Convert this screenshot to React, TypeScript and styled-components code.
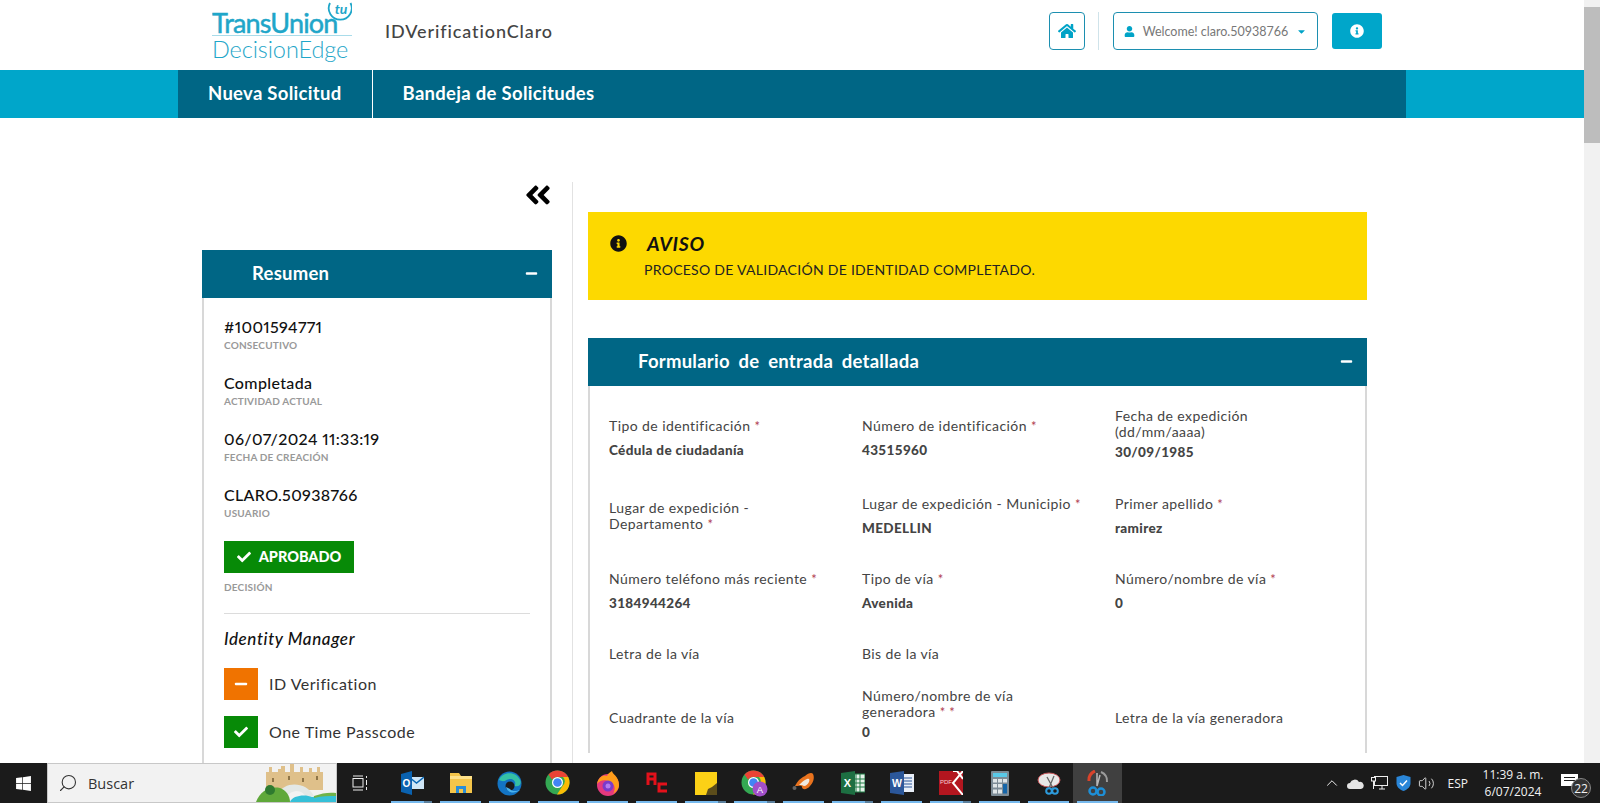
// @ts-nocheck
import React from "react";
import styled, { createGlobalStyle } from "styled-components";
import {
  FaHome,
  FaUser,
  FaCaretDown,
  FaInfoCircle,
  FaCheck,
  FaMinus,
  FaAngleDoubleLeft,
  FaWindows,
} from "react-icons/fa";
import { Search, ChevronUp, Volume2 } from "lucide-react";

const GlobalStyle = createGlobalStyle`
  html, body {
    margin: 0;
    padding: 0;
    overflow: hidden;
    background: #fff;
    font-family: "Lato", "Liberation Sans", sans-serif;
  }
  * { box-sizing: border-box; }
`;

const Screen = styled.div`
  width: 1600px;
  height: 803px;
  display: flex;
  flex-direction: column;
`;
const Viewport = styled.div`
  flex: 1;
  min-height: 0;
  display: flex;
`;
const Page = styled.div`
  flex: 1;
  min-width: 0;
  overflow: hidden;
`;
const Scrollbar = styled.div`
  width: 16px;
  background: #f1f1f1;
  padding-top: 7px;
`;
const ScrollThumb = styled.div`
  height: 136px;
  background: #bdbdbd;
`;

const Header = styled.header`
  height: 70px;
  display: flex;
  align-items: center;
  padding: 0 202px 0 212px;
`;
const Logo = styled.div`
  position: relative;
  width: 140px;
  height: 70px;
  color: #1fa6c9;
  overflow: hidden;
`;
const LogoTop = styled.div`
  font-size: 27px;
  font-weight: 400;
  letter-spacing: -0.8px;
  line-height: 24px;
  padding-top: 11px;
  height: 36px;
  border-bottom: 1px solid #a9dcea;
  -webkit-text-stroke: 0.5px #1fa6c9;
  white-space: nowrap;
`;
const LogoBottom = styled.div`
  font-size: 23.5px;
  font-weight: 300;
  letter-spacing: -0.1px;
  line-height: 26px;
  white-space: nowrap;
`;
const LogoMark = styled.svg`
  position: absolute;
  right: 0;
  top: 0;
`;
const AppTitle = styled.div`
  margin-left: 33px;
  margin-bottom: 8px;
  font-size: 18px;
  font-weight: 500;
  letter-spacing: 0.9px;
  color: #444;
`;
const Actions = styled.div`
  margin-left: auto;
  margin-bottom: 8px;
  display: flex;
  align-items: center;
`;
const OutlineButton = styled.div`
  height: 38px;
  width: ${(p) => p.$width}px;
  border: 1px solid #1c8fb0;
  border-radius: 4px;
  display: flex;
  align-items: center;
  justify-content: center;
  gap: 8px;
  color: #00a3c7;
  font-size: 13px;
  background: #fff;
`;
const ActionDivider = styled.div`
  width: 1px;
  height: 38px;
  background: #cfe3ea;
  margin: 0 14px 0 13px;
`;
const WelcomeText = styled.span`
  color: #777;
  font-size: 12.5px;
`;
const InfoButton = styled.div`
  height: 36px;
  width: 50px;
  margin-left: 14px;
  border-radius: 3px;
  background: #00a6ca;
  color: #fff;
  display: flex;
  align-items: center;
  justify-content: center;
  font-size: 14px;
`;

const NavBand = styled.nav`
  height: 48px;
  background: #00a6ca;
  padding: 0 178px;
`;
const NavInner = styled.div`
  height: 100%;
  background: #006685;
  display: flex;
`;
const NavItem = styled.div`
  padding: 0 30px 3px;
  display: flex;
  align-items: center;
  color: #fff;
  font-size: 18.5px;
  font-weight: 700;
  letter-spacing: 0.3px;
  border-right: ${(p) => (p.$divider ? "1px solid #fff" : "none")};
`;

const Content = styled.main`
  display: flex;
  margin-top: 64px;
  padding-left: 202px;
`;
const LeftColumn = styled.aside`
  width: 350px;
  flex: none;
`;
const CollapseRow = styled.div`
  height: 68px;
  display: flex;
  justify-content: flex-end;
  font-size: 30px;
  line-height: 1;
  color: #000;
`;
const CollapseIcon = styled.span`
  display: flex;
  margin: -2px -1px 0 0;
`;
const PanelHead = styled.div`
  height: 48px;
  background: #006685;
  color: #fff;
  display: flex;
  align-items: center;
  justify-content: space-between;
  padding: 0 14px 2px ${(p) => p.$indent}px;
  font-size: 18.5px;
  font-weight: 700;
  word-spacing: ${(p) => p.$wordGap || 0}px;
  letter-spacing: 0.25px;
`;
const PanelBody = styled.div`
  border-left: 2px solid #d8d8d8;
  border-right: 2px solid #d8d8d8;
  padding: ${(p) => p.$padding};
`;
const SummaryItem = styled.div`
  margin-bottom: 21.9px;
`;
const SummaryValue = styled.div`
  font-size: 16px;
  line-height: 20px;
  font-weight: 500;
  letter-spacing: 0.35px;
  color: #111;
  font-variant-numeric: proportional-nums;
`;
const SummaryLabel = styled.div`
  font-size: 10px;
  line-height: 14px;
  padding-top: 1px;
  font-weight: 700;
  letter-spacing: 0.2px;
  color: #999;
  text-transform: uppercase;
  margin-bottom: -1px;
`;
const ApprovedBadge = styled.div`
  width: 130px;
  height: 32px;
  background: #078a07;
  color: #fff;
  display: flex;
  align-items: center;
  justify-content: center;
  gap: 8px;
  font-size: 14.5px;
  font-weight: 900;
  margin: 1px 0 6px;
`;
const Rule = styled.div`
  height: 1px;
  background: #dcdcdc;
  margin: 20px 0 15px;
`;
const SectionName = styled.div`
  font-size: 17px;
  line-height: 20px;
  font-style: italic;
  font-weight: 500;
  letter-spacing: 0.6px;
  color: #111;
  margin-bottom: 19px;
`;
const CheckRow = styled.div`
  display: flex;
  align-items: center;
  gap: 11px;
  margin-bottom: 16px;
  font-size: 16px;
  letter-spacing: 0.5px;
  color: #333;
`;
const CheckLabel = styled.span`
  margin-top: -1px;
`;
const CheckBox = styled.div`
  width: 34px;
  height: 32px;
  background: ${(p) => p.$color};
  color: #fff;
  display: flex;
  align-items: center;
  justify-content: center;
  font-size: 14px;
`;

const VerticalLine = styled.div`
  width: 1px;
  background: #e2e2e2;
  margin: 0 15px 0 20px;
  flex: none;
`;
const RightColumn = styled.section`
  width: 779px;
  flex: none;
  padding-top: 30px;
`;
const Alert = styled.div`
  height: 88px;
  background: #fdd900;
  margin-bottom: 38px;
  display: flex;
  padding: 22px 0 0 22px;
`;
const AlertIcon = styled.div`
  font-size: 17px;
  color: #111;
  margin-right: 20px;
  padding-top: 1px;
`;
const AlertTitle = styled.div`
  font-size: 19.5px;
  line-height: 20px;
  font-style: italic;
  font-weight: 700;
  letter-spacing: 0.7px;
  color: #111;
  margin-bottom: 7px;
`;
const AlertText = styled.div`
  font-size: 14px;
  line-height: 18px;
  letter-spacing: 0.28px;
  color: #222;
  margin-left: -3px;
`;
const FieldGrid = styled.div`
  display: grid;
  grid-template-columns: 253px 253px 1fr;
  grid-template-rows: 74px 82px 68px 58px 70px;
`;
const Field = styled.div`
  display: flex;
  flex-direction: column;
  justify-content: center;
  padding-bottom: ${(p) => (p.$tight ? 7 : 0)}px;
`;
const FieldLabel = styled.div`
  font-size: 14px;
  line-height: 16px;
  letter-spacing: 0.42px;
  color: #444;
  padding-right: 30px;
`;
const Req = styled.span`
  color: #b04050;
  font-size: 13px;
  line-height: 1;
  white-space: nowrap;
`;
const FieldValue = styled.div`
  margin-top: ${(p) => (p.$tight ? 3 : 7)}px;
  font-size: 13.5px;
  line-height: 18px;
  font-weight: 900;
  letter-spacing: 0.35px;
  color: #444;
`;

const Taskbar = styled.footer`
  height: 40px;
  background: #1b1b1b;
  display: flex;
  align-items: stretch;
  color: #f2f2f2;
  font-family: "Open Sans", "Liberation Sans", sans-serif;
`;
const StartButton = styled.div`
  width: 47px;
  display: flex;
  align-items: center;
  justify-content: center;
  font-size: 17px;
  color: #fff;
`;
const SearchBox = styled.div`
  width: 290px;
  background: #f2f2f2;
  border: 1px solid #c8c8c8;
  color: #333;
  font-size: 14.5px;
  display: flex;
  align-items: center;
  overflow: hidden;
  padding-left: 10px;
`;
const SearchMirror = styled.span`
  display: flex;
  transform: scaleX(-1);
  margin-right: 10px;
`;
const SearchArt = styled.svg`
  margin-left: auto;
  flex: none;
`;
const TaskView = styled.div`
  width: 46px;
  display: flex;
  align-items: center;
  justify-content: center;
`;
const AppSlot = styled.div`
  width: 49px;
  display: flex;
  align-items: center;
  justify-content: center;
  position: relative;
  background: ${(p) => (p.$active ? "#404040" : "transparent")};
`;
const SlotLine = styled.div`
  position: absolute;
  bottom: 0;
  left: 4px;
  right: 4px;
  height: 2px;
  background: ${(p) =>
    p.$stacked
      ? "linear-gradient(to right, #76b9ed 80%, #5a7f9c 80%)"
      : "#76b9ed"};
`;
const AppSlots = styled.div`
  display: flex;
  margin-left: 4px;
`;
const Tray = styled.div`
  margin-left: auto;
  display: flex;
  align-items: center;
  padding-right: 15px;
`;
const TrayIcon = styled.div`
  display: flex;
  align-items: center;
  justify-content: center;
  width: ${(p) => p.$width || 24}px;
`;
const TrayText = styled.div`
  font-size: 12px;
  padding: 0 9px 0 10px;
`;
const Clock = styled.div`
  width: 72px;
  text-align: center;
  font-size: 12px;
  line-height: 17px;
`;
const Notify = styled.div`
  position: relative;
  width: 24px;
  height: 24px;
  margin-left: 12px;
`;
const NotifyBadge = styled.div`
  position: absolute;
  right: -6px;
  bottom: -3px;
  width: 20px;
  height: 20px;
  border-radius: 50%;
  background: #333;
  border: 1px solid #888;
  font-size: 12px;
  display: flex;
  align-items: center;
  justify-content: center;
`;

const OutlookIcon = () => (
  <svg width="24" height="24" viewBox="0 0 24 24">
    <rect x="9" y="6" width="15" height="12" fill="#cfe6f7" />
    <path d="M9 6l7.5 6L24 6" fill="none" stroke="#0a67b5" strokeWidth="1.4" />
    <path d="M1 3l11-3v24L1 21z" fill="#0a62b0" />
    <text x="6.5" y="16" fontSize="10" fontWeight="700" fill="#fff" textAnchor="middle" fontFamily="Liberation Sans">O</text>
  </svg>
);
const FolderIcon = () => (
  <svg width="24" height="22" viewBox="0 0 24 22">
    <path d="M1 1h9l2 3h11v17H1z" fill="#f5c54a" />
    <rect x="1" y="4" width="22" height="3" fill="#ffe28a" />
    <rect x="7" y="14" width="10" height="7" fill="#2a8ed8" />
    <rect x="10" y="17" width="4" height="4" fill="#f5c54a" />
  </svg>
);
const EdgeIcon = () => (
  <svg width="25" height="25" viewBox="0 0 25 25">
    <circle cx="12.5" cy="12.5" r="12" fill="#1374c4" />
    <path d="M2 9C5 1 19-1 23.5 10c1 4-2 6-6 5 3-5-3-9-8-6-3 2-5 1-7.500 0z" fill="#35c1a5" />
    <circle cx="13" cy="15" r="4.500" fill="#1b1b1b" />
    <path d="M9 16c1 6 9 7 14 3-3 1-8 2-10-1z" fill="#4bb3ee" />
  </svg>
);
const ChromeIcon = ({ badge }) => (
  <svg width="28" height="27" viewBox="0 0 28 27">
    <circle cx="12.500" cy="12.500" r="12" fill="#34a853" />
    <path d="M12.500.500A12 12 0 0 1 23.200 7H12.500A6 6 0 0 0 7 9.500L3.500 4.500A12 12 0 0 1 12.500.500z" fill="#ea4335" />
    <path d="M23.200 7A12 12 0 0 1 12 24.500L17.500 16A6 6 0 0 0 18 7z" fill="#fbbc05" />
    <circle cx="12.500" cy="12.500" r="5.500" fill="#fff" />
    <circle cx="12.500" cy="12.500" r="4.300" fill="#4285f4" />
    {badge && (
      <>
        <circle cx="19" cy="19" r="7.500" fill="#a14fc9" />
        <text x="19" y="22.500" fontSize="9.500" fill="#fff" textAnchor="middle" fontFamily="Liberation Sans">A</text>
      </>
    )}
  </svg>
);
const FirefoxIcon = () => (
  <svg width="24" height="25" viewBox="0 0 24 25">
    <circle cx="12" cy="14" r="11" fill="#e5397e" />
    <path d="M1 13C2 6 8 3 11 5 12 2 15 1 16 0c0 3 7 5 7 14 0 4-3 7-6 9 3-5 2-10-3-12C9 8 4 9 1 13z" fill="#ff9c1a" />
    <circle cx="12" cy="15" r="5.500" fill="#7a3bc9" />
    <circle cx="12" cy="15" r="2.500" fill="#b37bf0" />
  </svg>
);
const AcIcon = () => (
  <svg width="22" height="24" viewBox="0 0 22 24">
    <path d="M2 14V3h7v11M2 8h7" fill="none" stroke="#e3111b" strokeWidth="3" />
    <path d="M21 13h-8v7h8" fill="none" stroke="#e3111b" strokeWidth="3" />
  </svg>
);
const StickyIcon = () => (
  <svg width="22" height="23" viewBox="0 0 22 23">
    <rect width="22" height="23" fill="#fcd116" />
    <path d="M22 11v12H11l2-6 4-2z" fill="#5c4d1b" />
  </svg>
);
const SplashIcon = () => (
  <svg width="24" height="24" viewBox="0 0 24 24">
    <path d="M3 15C6 10 7 8 13 5c3-3 7-4 8-2 2 4 0 9-3 12-3 4-8 4-8 1 0-2-3-1-7-1z" fill="#e9731e" />
    <path d="M7 14c3-3 5-5 8-6 2-1 3 0 2 3-1 2-3 4-5 4-2-1-2-1-5-1z" fill="#efe9e0" />
    <circle cx="2.500" cy="17" r="2" fill="#666" />
  </svg>
);
const ExcelIcon = () => (
  <svg width="24" height="24" viewBox="0 0 24 24">
    <rect x="11" y="3" width="13" height="18" fill="#e6f2ea" stroke="#1f7a44" />
    <path d="M15 3v18M19 3v18M11 8h13M11 12h13M11 16h13" stroke="#1f7a44" strokeWidth="1" />
    <path d="M0 2l14-2v24L0 22z" fill="#1d6f42" />
    <text x="6.500" y="16" fontSize="11" fontWeight="700" fill="#fff" textAnchor="middle" fontFamily="Liberation Sans">X</text>
  </svg>
);
const WordIcon = () => (
  <svg width="24" height="24" viewBox="0 0 24 24">
    <rect x="11" y="3" width="13" height="18" fill="#e9eff8" />
    <path d="M14 7h8M14 10h8M14 13h8M14 16h8" stroke="#2b579a" strokeWidth="1.200" />
    <path d="M0 2l14-2v24L0 22z" fill="#2b579a" />
    <text x="7" y="16" fontSize="10.500" fontWeight="700" fill="#fff" textAnchor="middle" fontFamily="Liberation Sans">W</text>
  </svg>
);
const PdfIcon = () => (
  <svg width="24" height="24" viewBox="0 0 24 24">
    <rect width="24" height="24" fill="#b3161f" />
    <path d="M24 0L14 12l10 12M14 0h4l6 8" fill="none" stroke="#fff" strokeWidth="2" />
    <text x="7" y="13" fontSize="6" fill="#f7d3d3" textAnchor="middle" fontFamily="Liberation Sans">PDF</text>
  </svg>
);
const CalcIcon = () => (
  <svg width="18" height="25" viewBox="0 0 18 25">
    <rect width="18" height="25" rx="1" fill="#7c8b96" />
    <rect x="2" y="2" width="14" height="4" fill="#59c9e8" />
    <rect x="2" y="8" width="4" height="3.500" fill="#dfe5e8" />
    <rect x="7" y="8" width="4" height="3.500" fill="#dfe5e8" />
    <rect x="12" y="8" width="4" height="3.500" fill="#dfe5e8" />
    <rect x="2" y="13" width="4" height="3.500" fill="#dfe5e8" />
    <rect x="7" y="13" width="4" height="3.500" fill="#dfe5e8" />
    <rect x="12" y="13" width="4" height="9.500" fill="#1565a8" />
    <rect x="2" y="18.500" width="4" height="4" fill="#dfe5e8" />
    <rect x="7" y="18.500" width="4" height="4" fill="#dfe5e8" />
  </svg>
);
const SnipIcon = () => (
  <svg width="24" height="24" viewBox="0 0 24 24">
    <ellipse cx="12" cy="9" rx="11" ry="7" fill="#e8e8e8" stroke="#c9565a" strokeWidth="1" />
    <path d="M10 6l6 11M17 5l-5 12" stroke="#666" strokeWidth="1.300" />
    <circle cx="12" cy="20" r="2.800" fill="none" stroke="#2d9bdc" strokeWidth="2" />
    <circle cx="18" cy="20" r="2.800" fill="none" stroke="#2d9bdc" strokeWidth="2" />
  </svg>
);
const ScissorsIcon = () => (
  <svg width="22" height="26" viewBox="0 0 22 26">
    <path d="M8 1a10 10 0 0 0-6 10" fill="none" stroke="#d9432b" strokeWidth="3" />
    <path d="M14 2a10 10 0 0 1 6 10" fill="none" stroke="#9b9b9b" strokeWidth="2" />
    <path d="M10 3v13M13 5l-3 11" stroke="#b8b8b8" strokeWidth="1.500" />
    <circle cx="6" cy="21" r="3.500" fill="none" stroke="#1e8fd6" strokeWidth="2.500" />
    <circle cx="14" cy="22" r="3.500" fill="none" stroke="#1e8fd6" strokeWidth="2.500" />
  </svg>
);

const apps = [
  { key: "outlook", icon: <OutlookIcon />, stacked: true },
  { key: "folder", icon: <FolderIcon /> },
  { key: "edge", icon: <EdgeIcon /> },
  { key: "chrome", icon: <ChromeIcon /> },
  { key: "firefox", icon: <FirefoxIcon /> },
  { key: "ac", icon: <AcIcon /> },
  { key: "sticky", icon: <StickyIcon />, stacked: true },
  { key: "chrome-a", icon: <ChromeIcon badge />, stacked: true },
  { key: "splash", icon: <SplashIcon /> },
  { key: "excel", icon: <ExcelIcon />, stacked: true },
  { key: "word", icon: <WordIcon /> },
  { key: "pdf", icon: <PdfIcon />, stacked: true },
  { key: "calc", icon: <CalcIcon /> },
  { key: "snip", icon: <SnipIcon /> },
  { key: "scissors", icon: <ScissorsIcon />, active: true },
];

const summary = [
  ["#1001594771", "Consecutivo"],
  ["Completada", "Actividad actual"],
  ["06/07/2024 11:33:19", "Fecha de creación"],
  ["CLARO.50938766", "Usuario"],
];

const fields = [
  { label: "Tipo de identificación", req: "*", value: "Cédula de ciudadanía" },
  { label: "Número de identificación", req: "*", value: "43515960" },
  { label: "Fecha de expedición (dd/mm/aaaa)", value: "30/09/1985", tight: true },
  { label: "Lugar de expedición - Departamento", req: "*" },
  { label: "Lugar de expedición - Municipio", req: "*", value: "MEDELLIN" },
  { label: "Primer apellido", req: "*", value: "ramirez" },
  { label: "Número teléfono más reciente", req: "*", value: "3184944264" },
  { label: "Tipo de vía", req: "*", value: "Avenida" },
  { label: "Número/nombre de vía", req: "*", value: "0" },
  { label: "Letra de la vía" },
  { label: "Bis de la vía" },
  { label: "" },
  { label: "Cuadrante de la vía" },
  { label: "Número/nombre de vía generadora", req: "* *", value: "0", tight: true },
  { label: "Letra de la vía generadora" },
];

export default function App() {
  return (
    <>
      <GlobalStyle />
      <Screen>
        <Viewport>
          <Page>
            <Header>
              <Logo>
                <LogoMark width="34" height="24" viewBox="0 0 34 24">
                  <path d="M12 3A11.500 11.500 0 1 0 32.500 3" fill="none" stroke="#1fa6c9" strokeWidth="1.800" />
                  <text x="23" y="14" fontSize="14" fontWeight="700" fontStyle="italic" fill="#1fa6c9" textAnchor="middle" fontFamily="Lato">tu</text>
                </LogoMark>
                <LogoTop>TransUnion</LogoTop>
                <LogoBottom>DecisionEdge</LogoBottom>
              </Logo>
              <AppTitle>IDVerificationClaro</AppTitle>
              <Actions>
                <OutlineButton $width={36}>
                  <FaHome size={18} />
                </OutlineButton>
                <ActionDivider />
                <OutlineButton $width={205}>
                  <FaUser size={11} />
                  <WelcomeText>Welcome! claro.50938766</WelcomeText>
                  <FaCaretDown size={11} />
                </OutlineButton>
                <InfoButton>
                  <FaInfoCircle />
                </InfoButton>
              </Actions>
            </Header>
            <NavBand>
              <NavInner>
                <NavItem $divider>Nueva Solicitud</NavItem>
                <NavItem>Bandeja de Solicitudes</NavItem>
              </NavInner>
            </NavBand>
            <Content>
              <LeftColumn>
                <CollapseRow>
                  <CollapseIcon>
                    <FaAngleDoubleLeft />
                  </CollapseIcon>
                </CollapseRow>
                <PanelHead $indent={50}>
                  Resumen
                  <FaMinus size={13} />
                </PanelHead>
                <PanelBody $padding="19px 20px 40px 20px">
                  {summary.map(([value, label]) => (
                    <SummaryItem key={label}>
                      <SummaryValue>{value}</SummaryValue>
                      <SummaryLabel>{label}</SummaryLabel>
                    </SummaryItem>
                  ))}
                  <ApprovedBadge>
                    <FaCheck size={14} />
                    APROBADO
                  </ApprovedBadge>
                  <SummaryLabel>Decisión</SummaryLabel>
                  <Rule />
                  <SectionName>Identity Manager</SectionName>
                  <CheckRow>
                    <CheckBox $color="#f07300">
                      <FaMinus />
                    </CheckBox>
                    <CheckLabel>ID Verification</CheckLabel>
                  </CheckRow>
                  <CheckRow>
                    <CheckBox $color="#078a07">
                      <FaCheck />
                    </CheckBox>
                    <CheckLabel>One Time Passcode</CheckLabel>
                  </CheckRow>
                </PanelBody>
              </LeftColumn>
              <VerticalLine />
              <RightColumn>
                <Alert>
                  <AlertIcon>
                    <FaInfoCircle />
                  </AlertIcon>
                  <div>
                    <AlertTitle>AVISO</AlertTitle>
                    <AlertText>PROCESO DE VALIDACIÓN DE IDENTIDAD COMPLETADO.</AlertText>
                  </div>
                </Alert>
                <PanelHead $indent={50} $wordGap={4}>
                  Formulario de entrada detallada
                  <FaMinus size={13} />
                </PanelHead>
                <PanelBody $padding="15px 0 0 19px">
                  <FieldGrid>
                    {fields.map((f, i) => (
                      <Field key={i} $tight={f.tight}>
                        <FieldLabel>
                          {f.label} {f.req && <Req>{f.req}</Req>}
                        </FieldLabel>
                        {f.value && <FieldValue $tight={f.tight}>{f.value}</FieldValue>}
                      </Field>
                    ))}
                  </FieldGrid>
                </PanelBody>
              </RightColumn>
            </Content>
          </Page>
          <Scrollbar>
            <ScrollThumb />
          </Scrollbar>
        </Viewport>
        <Taskbar>
          <StartButton>
            <FaWindows />
          </StartButton>
          <SearchBox>
            <SearchMirror>
              <Search size={20} strokeWidth={1.3} />
            </SearchMirror>
            Buscar
            <SearchArt width="80" height="38" viewBox="0 0 80 38">
              <path d="M10 8h3V3h3v5h6V5h3V2h4v6h5V0h4v8h6V3h3v5h6V4h3v4h5V3h3v5h3v18H10z" fill="#dfc08a" />
              <path d="M16 14h2v4h-2zM32 12h2v4h-2zM46 14h2v4h-2zM60 12h2v4h-2z" fill="#8f7548" />
              <path d="M22 30c6-13 28-13 36 2l-8 1c-4-8-14-8-20 0z" fill="#e3e8e6" />
              <path d="M0 38c4-10 12-16 24-14 6 2 10 8 10 14z" fill="#5fa83a" />
              <path d="M34 38c2-7 16-8 22-5 8-1 16-3 24-1v6z" fill="#35c0d8" />
              <path d="M58 32c8-3 16-4 22-3v3c-8 0-14 0-22 2z" fill="#6fb34a" />
              <circle cx="14" cy="26" r="5" fill="#2f7a2f" />
            </SearchArt>
          </SearchBox>
          <TaskView>
            <svg width="16" height="16" viewBox="0 0 16 16" fill="none" stroke="#eee" strokeWidth="1">
              <rect x="1" y="3.500" width="10" height="8.500" />
              <path d="M1 1h10M1 15h10M14.500 1v2M14.500 5v5M14.500 12v3" />
            </svg>
          </TaskView>
          <AppSlots>
            {apps.map((app) => (
              <AppSlot key={app.key} $active={app.active}>
                {app.icon}
                <SlotLine $stacked={app.stacked} />
              </AppSlot>
            ))}
          </AppSlots>
          <Tray>
            <TrayIcon>
              <ChevronUp size={18} strokeWidth={1.3} />
            </TrayIcon>
            <TrayIcon>
              <svg width="17" height="11" viewBox="0 0 17 11">
                <path d="M3 11a3 3 0 0 1 0-6 5 5 0 0 1 9-1 3.500 3.500 0 0 1 2 7z" fill="#e4e4e4" />
              </svg>
            </TrayIcon>
            <TrayIcon>
              <svg width="17" height="14" viewBox="0 0 17 14" fill="none" stroke="#eee" strokeWidth="1">
                <rect x="3.500" y=".500" width="13" height="9" />
                <rect x=".500" y="1.500" width="4" height="3.500" fill="#1b1b1b" />
                <path d="M2.500 5v8M8 13h6M11 10v3" />
              </svg>
            </TrayIcon>
            <TrayIcon>
              <svg width="15" height="16" viewBox="0 0 15 16">
                <path d="M7.500 0l7 2v6c0 4-3 6.500-7 8-4-1.500-7-4-7-8V2z" fill="#2a86d8" />
                <path d="M4 8l2.500 2.500L11 5.500" fill="none" stroke="#fff" strokeWidth="1.500" />
              </svg>
            </TrayIcon>
            <TrayIcon $width={22}>
              <Volume2 size={17} strokeWidth={1.2} />
            </TrayIcon>
            <TrayText>ESP</TrayText>
            <Clock>
              <div>11:39 a. m.</div>
              <div>6/07/2024</div>
            </Clock>
            <Notify>
              <svg width="17" height="16" viewBox="0 0 17 16" fill="#fff">
                <rect y="2" width="17" height="12" />
                <path d="M3 5.500h11M3 8.500h11" stroke="#1b1b1b" strokeWidth="1" />
              </svg>
              <NotifyBadge>22</NotifyBadge>
            </Notify>
          </Tray>
        </Taskbar>
      </Screen>
    </>
  );
}
